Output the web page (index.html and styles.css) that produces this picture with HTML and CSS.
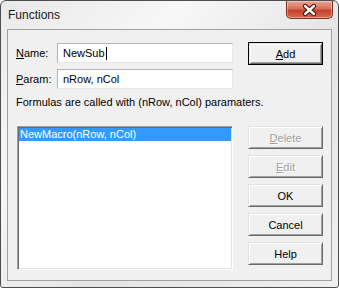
FILE: index.html
```html
<!DOCTYPE html>
<html lang="en">
    <head>
        <meta charset="UTF-8" />
        <meta name="viewport" content="width=device-width, initial-scale=1.0" />
        <title>Functions</title>
        <link rel="stylesheet" href="styles.css">
    </head>
    <body>
        <div class="window">
            <div class="titlebar">
                <span class="title">Functions</span>
                <button class="close-btn" aria-label="Close">
                    <svg width="47" height="18" viewBox="0 0 47 18">
                        <path d="M19 5 L28 13 M28 5 L19 13" stroke="#4a1e14" stroke-width="5" stroke-linecap="round" fill="none" />
                        <path d="M19 5 L28 13 M28 5 L19 13" stroke="#ffffff" stroke-width="2.6" stroke-linecap="round" fill="none" />
                    </svg>
                </button>
            </div>

            <div class="client">
                <div class="top-row">
                    <div class="fields">
                        <div class="field">
                            <label><u>N</u>ame:</label>
                            <div class="textbox">NewSub<span class="caret"></span></div>
                        </div>
                        <div class="field">
                            <label><u>P</u>aram:</label>
                            <div class="textbox">nRow, nCol</div>
                        </div>
                    </div>
                    <button class="btn btn-default"><u>A</u>dd</button>
                </div>

                <p class="hint">Formulas are called with (nRow, nCol) paramaters.</p>

                <div class="bottom-row">
                    <div class="listbox">
                        <div class="list-item selected">NewMacro(nRow, nCol)</div>
                    </div>
                    <div class="btn-col">
                        <button class="btn" disabled><u>D</u>elete</button>
                        <button class="btn" disabled><u>E</u>dit</button>
                        <button class="btn">OK</button>
                        <button class="btn">Cancel</button>
                        <button class="btn">Help</button>
                    </div>
                </div>
            </div>
        </div>
    </body>
</html>
```

FILE: styles.css
```css
* {
    margin: 0;
    padding: 0;
    box-sizing: border-box;
}

body {
    font-family: 'Liberation Sans', Arial, sans-serif;
    font-size: 11px;
    background-color: #ffffff;
}

.window {
    width: 339px;
    height: 288px;
    display: flex;
    flex-direction: column;
    border: 1px solid #4d4d4d;
    border-radius: 6px 6px 3px 3px;
    padding: 0 6px 6px 6px;
    background: linear-gradient(135deg, #e9e9e9 0%, #f7f7f7 30%, #e4e4e4 60%, #efefef 100%);
    overflow: hidden;
}

.titlebar {
    height: 28px;
    display: flex;
    align-items: flex-start;
}

.title {
    margin-top: 7px;
    margin-left: 1px;
    font-size: 12px;
    line-height: 15px;
    color: #1a1a1a;
}

.close-btn {
    margin-left: auto;
    margin-right: -1px;
    width: 47px;
    height: 18px;
    border: 1px solid #7c3021;
    border-top: none;
    border-radius: 0 0 5px 5px;
    background: linear-gradient(#e9a594 0%, #d5715a 45%, #c2412a 55%, #d86a4e 100%);
    box-shadow: inset 0 0 0 1px rgba(255, 255, 255, 0.35);
    display: flex;
    justify-content: center;
    align-items: center;
}

.close-btn svg {
    display: block;
}

.client {
    flex: 1;
    border: 1px solid #a0a0a0;
    background-color: #f0f0f0;
    padding: 12px 8px 0 8px;
}

.top-row {
    display: flex;
    align-items: flex-start;
}

.fields {
    width: 217px;
    margin-top: 1px;
    display: flex;
    flex-direction: column;
    gap: 6px;
}

.field {
    display: flex;
    align-items: center;
    height: 20px;
}

.field label {
    width: 41px;
    color: #000;
}

.textbox {
    width: 176px;
    height: 20px;
    background-color: #fff;
    border: 1px solid;
    border-color: #b4b4b4 #e8e8e8 #e8e8e8 #b4b4b4;
    padding: 0 5px;
    display: flex;
    align-items: center;
    font-size: 11px;
    color: #000;
}

.caret {
    display: inline-block;
    width: 1px;
    height: 13px;
    background-color: #000;
    margin-left: 1px;
}

.btn {
    width: 75px;
    height: 23px;
    font-family: inherit;
    font-size: 11px;
    color: #000;
    background-color: #f0f0f0;
    border: 1px solid;
    border-color: #e3e3e3 #696969 #696969 #e3e3e3;
    box-shadow: inset 1px 1px 0 #ffffff, inset -1px -1px 0 #a0a0a0;
}

.btn-default {
    margin-left: auto;
    border-color: #000;
    box-shadow: inset 1px 1px 0 #e3e3e3, inset -1px -1px 0 #696969,
        inset 2px 2px 0 #ffffff, inset -2px -2px 0 #a0a0a0;
}

.btn:disabled {
    color: #a0a0a0;
    text-shadow: 1px 1px 0 #ffffff;
}

.hint {
    margin-top: 6px;
    line-height: 14px;
    color: #000;
}

.bottom-row {
    display: flex;
    align-items: flex-start;
    margin-top: 17px;
}

.listbox {
    width: 216px;
    height: 144px;
    margin-left: 1px;
    background-color: #fff;
    border: 1px solid;
    border-color: #a0a0a0 #ffffff #ffffff #a0a0a0;
    box-shadow: inset 1px 1px 0 #696969, inset -1px -1px 0 #e3e3e3;
    padding: 1px;
}

.list-item {
    height: 13px;
    line-height: 13px;
    padding-left: 1px;
}

.list-item.selected {
    background-color: #3399ff;
    color: #fff;
}

.btn-col {
    margin-left: auto;
    display: flex;
    flex-direction: column;
    gap: 6px;
}
```
